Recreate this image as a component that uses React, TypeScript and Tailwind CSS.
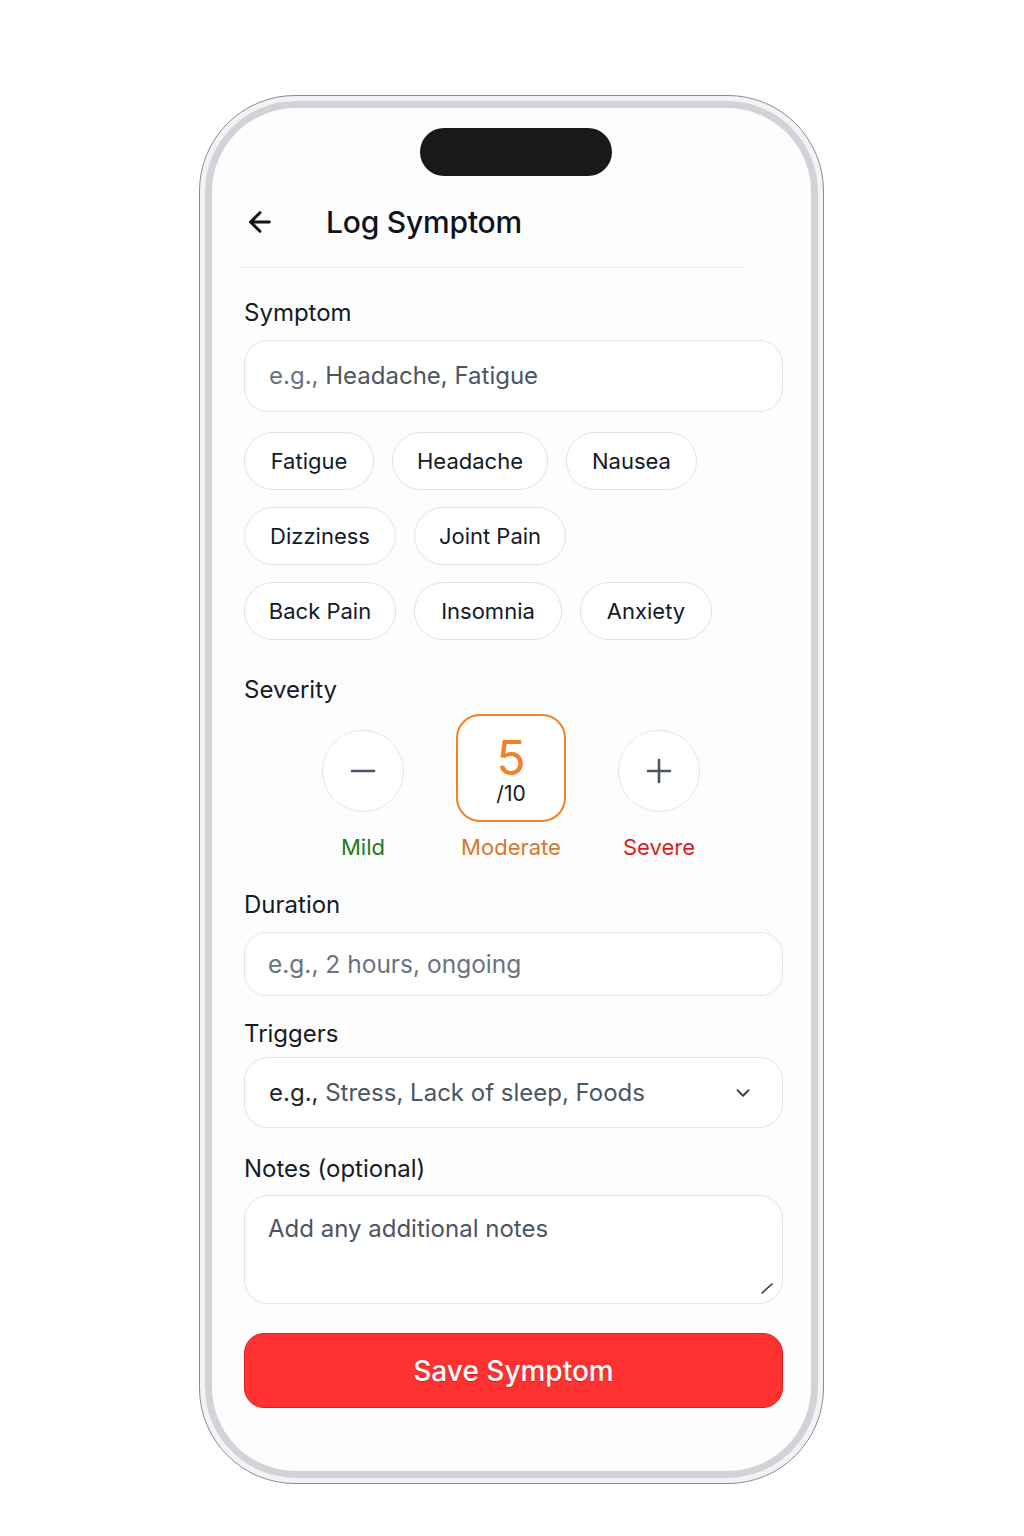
import { ArrowLeft, ChevronDown } from "lucide-react";

const chipRows = [
    [
        { label: "Fatigue", w: "w-[130px]" },
        { label: "Headache", w: "w-[156px]" },
        { label: "Nausea", w: "w-[131px]" },
    ],
    [
        { label: "Dizziness", w: "w-[152px]" },
        { label: "Joint Pain", w: "w-[152px]" },
    ],
    [
        { label: "Back Pain", w: "w-[152px]" },
        { label: "Insomnia", w: "w-[148px]" },
        { label: "Anxiety", w: "w-[132px]" },
    ],
];

function Label({ children, className }: { children: React.ReactNode; className: string }) {
    return <h3 className={`text-[24px] leading-[28px] text-[#161b26] ${className}`}>{children}</h3>;
}

export default function App() {
    return (
        <div className="min-h-[1536px] w-[1024px] bg-white pt-[95px] pl-[199px] font-['Inter',sans-serif]">
            <div className="w-[625px] h-[1389px] rounded-[96px] border border-[#8a8b90] bg-[#f3f3f5] p-[5px]">
                <div className="h-full rounded-[91px] border-[7px] border-[#d2d3d8] bg-[#fdfdfe] pl-[32px] pr-[28px] flex flex-col">
                    <div className="mt-[20px] mx-auto h-[48px] w-[192px] rounded-full bg-[#19191b] translate-x-[2px]" />

                    <header className="mt-[24px] h-[44px] flex items-center">
                        <ArrowLeft className="text-[#111] w-[32px] h-[32px]" strokeWidth={2.2} />
                        <h1 className="ml-[50px] text-[30px] font-medium text-[#10131c] tracking-[-0.2px]">Log Symptom</h1>
                    </header>
                    <div className="mt-[23px] ml-[-3px] h-px w-[502px] bg-[#ececf0]" />

                    <Label className="mt-[31px]">Symptom</Label>
                    <div className="mt-[13px] h-[72px] rounded-[24px] border border-[#e3e5e9] bg-white flex items-center px-[24px] text-[24px]">
                        <span className="text-[#6b7280]">e.g.,&nbsp;</span>
                        <span className="text-[#4b5563]">Headache, Fatigue</span>
                    </div>

                    <ul className="mt-[20px] flex flex-col gap-y-[17px]">
                        {chipRows.map((row, i) => (
                            <li key={i} className="flex gap-x-[18px]">
                                {row.map((chip) => (
                                    <span
                                        key={chip.label}
                                        className={`${chip.w} h-[58px] rounded-full border border-[#e1e3e7] bg-white flex items-center justify-center text-[22px] text-[#141a26]`}
                                    >
                                        {chip.label}
                                    </span>
                                ))}
                            </li>
                        ))}
                    </ul>

                    <Label className="mt-[36px]">Severity</Label>
                    <div className="mt-[10px] ml-[45px] flex">
                        <div className="w-[148px] flex flex-col items-center">
                            <div className="h-[108px] flex items-center justify-center pt-[6px]">
                                <button className="w-[82px] h-[82px] rounded-full border border-[#e3e5e9] bg-white flex items-center justify-center">
                                    <svg width="26" height="26" viewBox="0 0 26 26">
                                        <path d="M2 13h22" stroke="#4b5563" strokeWidth="2.6" strokeLinecap="round" />
                                    </svg>
                                </button>
                            </div>
                            <span className="mt-[11px] text-[22px] leading-[28px] text-[#217a21]">Mild</span>
                        </div>
                        <div className="w-[148px] flex flex-col items-center">
                            <div className="w-[110px] h-[108px] rounded-[24px] border-2 border-[#f08228] bg-white flex flex-col items-center justify-center">
                                <span className="text-[48px] leading-[44px] text-[#f08228] mt-[6px]">5</span>
                                <span className="text-[21px] leading-[24px] text-[#151a24] mt-[2px]">/10</span>
                            </div>
                            <span className="mt-[11px] text-[22px] leading-[28px] text-[#d9772c]">Moderate</span>
                        </div>
                        <div className="w-[148px] flex flex-col items-center">
                            <div className="h-[108px] flex items-center justify-center pt-[6px]">
                                <button className="w-[82px] h-[82px] rounded-full border border-[#e3e5e9] bg-white flex items-center justify-center">
                                    <svg width="26" height="26" viewBox="0 0 26 26">
                                        <path d="M2 13h22M13 2v22" stroke="#4b5563" strokeWidth="2.6" strokeLinecap="round" />
                                    </svg>
                                </button>
                            </div>
                            <span className="mt-[11px] text-[22px] leading-[28px] text-[#d81f1f]">Severe</span>
                        </div>
                    </div>

                    <Label className="mt-[30px]">Duration</Label>
                    <div className="mt-[13px] h-[64px] rounded-[22px] border border-[#e3e5e9] bg-white flex items-center px-[23px] text-[24.5px] text-[#6b7280]">
                        e.g., 2 hours, ongoing
                    </div>

                    <Label className="mt-[24px]">Triggers</Label>
                    <div className="mt-[9px] h-[71px] rounded-[24px] border border-[#e3e5e9] bg-white flex items-center pl-[24px] pr-[28px] text-[24px]">
                        <span className="text-[#1f2430]">e.g.,&nbsp;</span>
                        <span className="text-[#4b5563]">Stress, Lack of sleep, Foods</span>
                        <ChevronDown className="ml-auto w-[22px] h-[22px] text-[#374151]" strokeWidth={2} />
                    </div>

                    <Label className="mt-[27px]">Notes (optional)</Label>
                    <div className="relative mt-[12px] h-[109px] rounded-[24px] border border-[#e3e5e9] bg-white px-[23px] pt-[15px] text-[24px] text-[#4b5563]">
                        Add any additional notes
                        <svg className="absolute right-[8px] bottom-[8px]" width="14" height="14" viewBox="0 0 14 14">
                            <path d="M2 12L12 3" stroke="#333" strokeWidth="1.6" strokeLinecap="round" />
                        </svg>
                    </div>

                    <button className="mt-[29px] h-[75px] rounded-[20px] border border-[#e0201f] bg-[#ff3131] text-white text-[28px] font-medium [text-shadow:0_1px_1px_rgba(120,0,0,0.35)]">
                        Save Symptom
                    </button>
                </div>
            </div>
        </div>
    );
}
